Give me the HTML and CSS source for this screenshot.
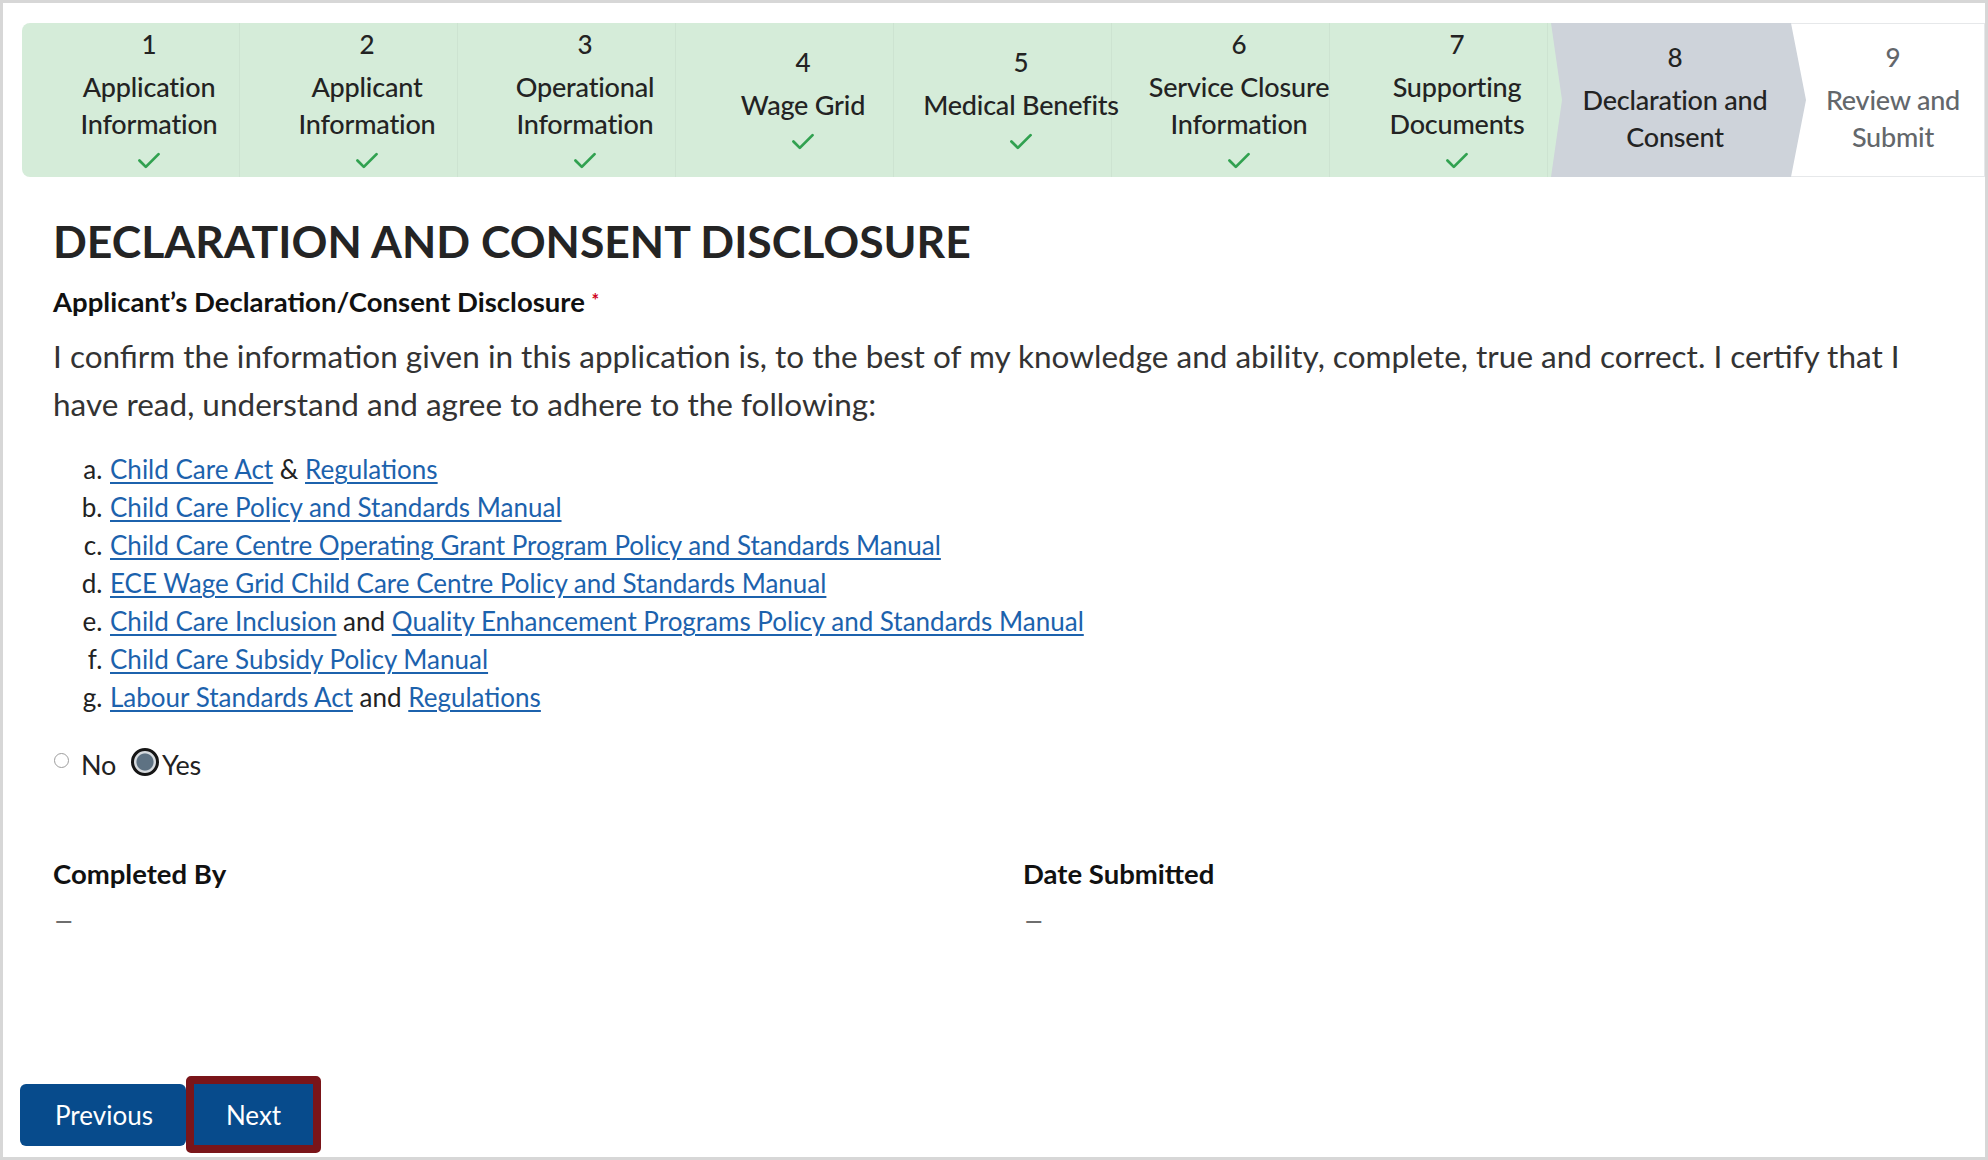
FILE: index.html
```html
<!DOCTYPE html>
<html lang="en">
<head>
  <meta charset="UTF-8">
  <meta name="viewport" content="width=device-width, initial-scale=1.0">
  <title>Declaration and Consent</title>
  <link rel="stylesheet" href="styles.css">
</head>
<body>
  <div class="page">
    <ol class="stepper">
      <li class="step done">
        <span class="step-num">1</span>
        <span class="step-label">Application<br>Information</span>
        <svg class="step-check" viewBox="0 0 22 16"><polyline points="2,8 8,14 20,2"/></svg>
      </li>
      <li class="step done">
        <span class="step-num">2</span>
        <span class="step-label">Applicant<br>Information</span>
        <svg class="step-check" viewBox="0 0 22 16"><polyline points="2,8 8,14 20,2"/></svg>
      </li>
      <li class="step done">
        <span class="step-num">3</span>
        <span class="step-label">Operational<br>Information</span>
        <svg class="step-check" viewBox="0 0 22 16"><polyline points="2,8 8,14 20,2"/></svg>
      </li>
      <li class="step done">
        <span class="step-num">4</span>
        <span class="step-label">Wage Grid</span>
        <svg class="step-check" viewBox="0 0 22 16"><polyline points="2,8 8,14 20,2"/></svg>
      </li>
      <li class="step done">
        <span class="step-num">5</span>
        <span class="step-label">Medical Benefits</span>
        <svg class="step-check" viewBox="0 0 22 16"><polyline points="2,8 8,14 20,2"/></svg>
      </li>
      <li class="step done">
        <span class="step-num">6</span>
        <span class="step-label">Service Closure<br>Information</span>
        <svg class="step-check" viewBox="0 0 22 16"><polyline points="2,8 8,14 20,2"/></svg>
      </li>
      <li class="step done">
        <span class="step-num">7</span>
        <span class="step-label">Supporting<br>Documents</span>
        <svg class="step-check" viewBox="0 0 22 16"><polyline points="2,8 8,14 20,2"/></svg>
      </li>
      <li class="step current">
        <span class="step-num">8</span>
        <span class="step-label">Declaration and<br>Consent</span>
      </li>
      <li class="step todo">
        <span class="step-num">9</span>
        <span class="step-label">Review and<br>Submit</span>
      </li>
    </ol>

    <div class="content">
      <h1 class="title">DECLARATION AND CONSENT DISCLOSURE</h1>
      <div class="field-label">Applicant’s Declaration/Consent Disclosure <span class="req">*</span></div>
      <p class="statement">
        I confirm the information given in this application is, to the best of my knowledge and ability, complete, true and correct. I certify that I
        have read, understand and agree to adhere to the following:
      </p>
      <ol class="docs">
        <li><a href="#">Child Care Act</a> &amp; <a href="#">Regulations</a></li>
        <li><a href="#">Child Care Policy and Standards Manual</a></li>
        <li><a href="#">Child Care Centre Operating Grant Program Policy and Standards Manual</a></li>
        <li><a href="#">ECE Wage Grid Child Care Centre Policy and Standards Manual</a></li>
        <li><a href="#">Child Care Inclusion</a> and <a href="#">Quality Enhancement Programs Policy and Standards Manual</a></li>
        <li><a href="#">Child Care Subsidy Policy Manual</a></li>
        <li><a href="#">Labour Standards Act</a> and <a href="#">Regulations</a></li>
      </ol>

      <div class="choice">
        <span class="radio"></span>
        <span class="choice-text">No</span>
        <span class="radio checked"></span>
        <span class="choice-text yes">Yes</span>
      </div>

      <div class="meta">
        <div>
          <div class="meta-label">Completed By</div>
          <div class="meta-value">—</div>
        </div>
        <div>
          <div class="meta-label">Date Submitted</div>
          <div class="meta-value">—</div>
        </div>
      </div>
    </div>

    <div class="actions">
      <button class="btn" type="button">Previous</button>
      <button class="btn btn-next" type="button">Next</button>
    </div>
  </div>
</body>
</html>
```

FILE: styles.css
```css
body {
  margin: 0;
  background: #fff;
  font-family: Lato, 'Noto Sans', sans-serif;
  color: #2b2b2b;
}
.page {
  height: 1160px;
  box-sizing: border-box;
  border: 3px solid #d7d7d7;
  display: flex;
  flex-direction: column;
}

/* stepper */
.stepper {
  display: flex;
  list-style: none;
  margin: 20px 0 0 19px;
  padding: 0;
  height: 154px;
}
.step {
  flex: 1 1 0;
  min-width: 0;
  position: relative;
  display: flex;
  flex-direction: column;
  align-items: center;
  justify-content: center;
  box-sizing: border-box;
  padding: 0 0 6px 36px;
  text-align: center;
  color: #232323;
}
.step.done {
  background: #d5ecd9;
  box-shadow: inset -1px 0 0 rgba(0, 0, 0, 0.035);
}
.step:first-child {
  border-radius: 8px 0 0 8px;
}
.step.current {
  background: #d5ecd9;
  z-index: 1;
}
.step.current::before {
  content: '';
  position: absolute;
  top: 0;
  bottom: 0;
  left: 3px;
  right: -40px;
  background: #ced3da;
  clip-path: polygon(0 0, calc(100% - 15px) 0, 100% 50%, calc(100% - 15px) 100%, 0 100%, 11px 50%);
}
.step.todo {
  background: #fff;
  color: #63676b;
  border-top: 1px solid #e6e8ea;
  border-bottom: 1px solid #e6e8ea;
  border-right: 1px solid #e6e8ea;
}
.step-num,
.step-label,
.step-check {
  position: relative;
  z-index: 1;
}
.step-num {
  font-size: 26px;
  line-height: 37px;
  font-weight: 500;
  margin-bottom: 5px;
}
.step-label {
  font-size: 27px;
  line-height: 37px;
  font-weight: 500;
  letter-spacing: -0.2px;
  white-space: nowrap;
}
.step-check {
  width: 24px;
  height: 17px;
  margin-top: 10px;
}
.step-check polyline {
  fill: none;
  stroke: #31a150;
  stroke-width: 2.6;
  stroke-linecap: round;
  stroke-linejoin: round;
}

/* form content */
.content {
  padding: 0 50px 0 50px;
}
.title {
  margin: 37px 0 0;
  font-size: 44.5px;
  line-height: 1.2;
  font-weight: 700;
  color: #242424;
}
.field-label {
  margin-top: 17px;
  font-size: 27.5px;
  line-height: 32px;
  font-weight: 700;
  color: #111;
}
.req {
  color: #d0021b;
  font-size: 18px;
  vertical-align: 5px;
}
.statement {
  margin: 14px 0 0;
  font-size: 31.5px;
  line-height: 48px;
  color: #333;
}
.docs {
  list-style: lower-alpha;
  margin: 22px 0 0;
  padding-left: 56px;
  font-size: 26px;
  line-height: 38px;
  color: #222;
}
.docs li {
  padding-left: 1px;
}
.docs a {
  color: #1c62ad;
  text-decoration: underline;
  text-underline-offset: 3px;
}
.choice {
  display: flex;
  align-items: center;
  margin-top: 30px;
  height: 32px;
}
.radio {
  width: 15px;
  height: 15px;
  box-sizing: border-box;
  border: 1px solid #9d9d9d;
  border-radius: 50%;
  background: #fff;
  margin: 7px 12px 0 1px;
  align-self: flex-start;
}
.radio.checked {
  width: 28px;
  height: 28px;
  border: 3px solid #151515;
  background: radial-gradient(circle, #5e7283 0 52%, #d6dade 58% 100%);
  margin: 2px 3px 0 2px;
}
.choice-text {
  font-size: 27px;
  line-height: 32px;
  padding-top: 6px;
  margin-right: 13px;
  color: #222;
  letter-spacing: -0.3px;
}
.choice-text.yes {
  margin-right: 0;
}
.meta {
  display: grid;
  grid-template-columns: 970px 1fr;
  margin-top: 80px;
}
.meta-label {
  font-size: 27.5px;
  line-height: 32px;
  font-weight: 700;
  color: #111;
}
.meta-value {
  margin-top: 16px;
  font-size: 22px;
  line-height: 30px;
  font-weight: 700;
  color: #6e6e6e;
  padding-left: 2px;
}

/* buttons */
.actions {
  margin: auto 0 4px 17px;
  display: flex;
  align-items: center;
}
.btn {
  background: #074b8c;
  color: #fff;
  border: none;
  border-radius: 6px;
  height: 62px;
  padding: 0 33px 0 35px;
  font-family: Lato, 'Noto Sans', sans-serif;
  font-size: 26px;
  cursor: pointer;
}
.btn-next {
  box-sizing: content-box;
  height: 61px;
  padding: 0 32px;
  border: 8px solid #7a1519;
  border-radius: 5px;
}
```
